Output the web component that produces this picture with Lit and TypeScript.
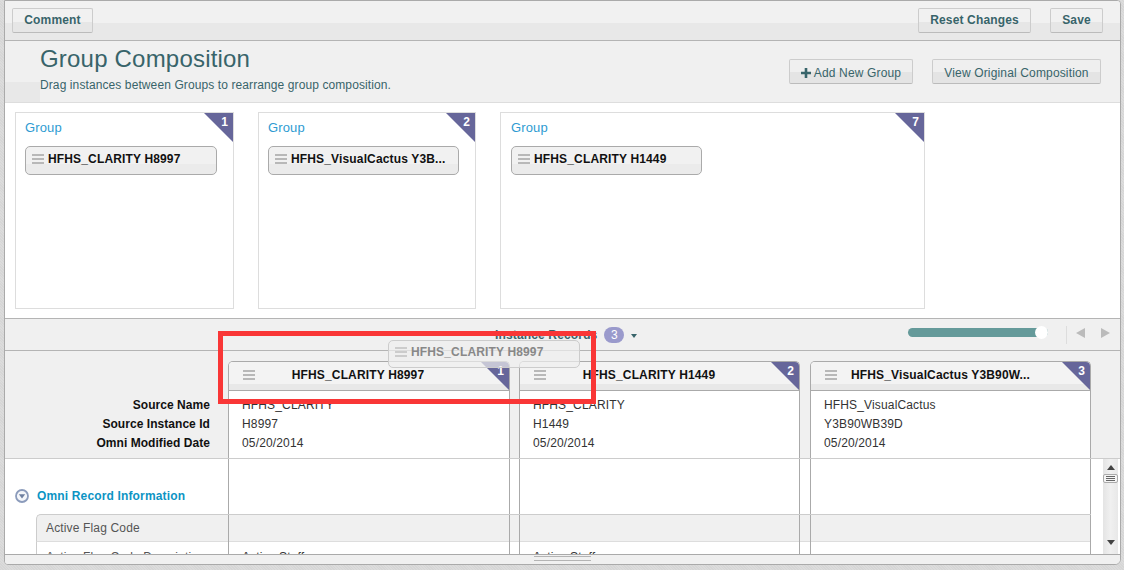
import { LitElement, html, css, svg } from "lit";
import { customElement } from "lit/decorators.js";

const groups = [
  { n: 1, w: 219, name: "HFHS_CLARITY H8997" },
  { n: 2, w: 218, name: "HFHS_VisualCactus Y3B..." },
  { n: 7, w: 425, name: "HFHS_CLARITY H1449" },
];
const cols = [
  { n: 1, title: "HFHS_CLARITY H8997", src: "HFHS_CLARITY", id: "H8997" },
  { n: 2, title: "HFHS_CLARITY H1449", src: "HFHS_CLARITY", id: "H1449" },
  { n: 3, title: "HFHS_VisualCactus Y3B90W...", src: "HFHS_VisualCactus", id: "Y3B90WB39D" },
];

const grip = html`<span class="grip"><i></i><i></i><i></i></span>`;

@customElement("app-root")
export class AppRoot extends LitElement {
  static styles = css`
    :host {
      display: block;
      width: 1124px;
      height: 570px;
      overflow: hidden;
      position: relative;
      font-family: "Liberation Sans", Arial, sans-serif;
      font-size: 12px;
      letter-spacing: 0.15px;
      background: repeating-linear-gradient(45deg, #d6d6d6 0 1px, #dcdcdc 1px 2px);
      box-sizing: border-box;
      padding: 0 3px 5px 4px;
    }
    * { box-sizing: border-box; }
    .panel {
      height: 565px;
      display: flex;
      flex-direction: column;
      border: 1px solid #aaa;
      border-radius: 0 4px 6px 4px;
      background: #fff;
      overflow: hidden;
      position: relative;
    }
    .btn {
      height: 25px;
      border: 1px solid #ccc;
      border-bottom-color: #bbb;
      border-radius: 2px;
      background: linear-gradient(#f1f1f1 0 55%, #e6e6e6 55%);
      color: #38646a;
      font: inherit;
      letter-spacing: inherit;
      font-weight: bold;
      padding: 0;
      display: flex;
      align-items: center;
      justify-content: center;
      flex: none;
    }
    .toolbar {
      flex: none;
      height: 40px;
      display: flex;
      align-items: center;
      padding: 0 17px 1px 7px;
      border-bottom: 1px solid #b4b4b4;
      background: linear-gradient(#f1f1f1 0 57%, #e8e8e8 57%);
    }
    .b-comment { width: 81px; }
    .b-reset { width: 113px; margin-left: auto; }
    .b-save { width: 53px; margin-left: 19px; }
    .header {
      flex: none;
      height: 62px;
      display: flex;
      background: #f0f0f0;
      border-bottom: 1px solid #ddd;
    }
    .hdr-side {
      width: 35px;
      flex: none;
      background: linear-gradient(#f0f0f0 0 68%, #e8e8e8 68%);
    }
    .hdr-text { flex: 1; padding-top: 4px; color: #38646a; }
    .hdr-text h1 {
      margin: 0;
      font-size: 24px;
      line-height: 27px;
      font-weight: normal;
      letter-spacing: 0.2px;
    }
    .hdr-text p { margin: 6px 0 0; line-height: 14px; letter-spacing: 0.1px; }
    .hdr-actions {
      display: flex;
      gap: 19px;
      padding: 18px 19px 0 0;
    }
    .hdr-actions .btn {
      font-weight: normal;
      padding-top: 2px;
      background: linear-gradient(#efefef 0 50%, #e4e4e4 50%);
    }
    .b-add { width: 124px; gap: 3px; }
    .b-view { width: 169px; }
    .groups {
      flex: none;
      height: 216px;
      display: flex;
      gap: 24px;
      padding: 9px 10px;
      border-bottom: 1px solid #b4b4b4;
    }
    .group {
      height: 197px;
      border: 1px solid #ddd;
      position: relative;
      padding: 8px 9px;
    }
    .group h3 {
      margin: 0;
      font-size: 13px;
      line-height: 14px;
      font-weight: normal;
      color: #2e9bd2;
    }
    .group:nth-child(3) { padding-left: 10px; }
    .group:nth-child(n + 2) .chip { width: 191px; }
    .corner {
      position: absolute;
      top: 0;
      right: 0;
      width: 29px;
      height: 29px;
      background: #66669a;
      clip-path: polygon(0 0, 100% 0, 100% 100%);
      color: #fff;
      font-weight: bold;
      text-align: right;
      padding: 2px 5px 0 0;
      line-height: 14px;
    }
    .chip {
      margin-top: 11px;
      width: 192px;
      height: 29px;
      border: 1px solid #aaa;
      border-radius: 5px;
      background: linear-gradient(#f1f1f1 0 62%, #ebebeb 62%);
      display: flex;
      align-items: center;
      padding: 0 6px 4px 6px;
      font-weight: bold;
      color: #111;
      gap: 4px;
    }
    .chip span.txt {
      flex: 1;
      min-width: 0;
      white-space: nowrap;
    }
    .grip {
      flex: none;
      width: 12px;
      display: flex;
      flex-direction: column;
      gap: 2px;
    }
    .grip i { display: block; height: 2px; background: #b8b8b8; }
    .bar {
      flex: none;
      height: 32px;
      display: flex;
      align-items: center;
      background: #f0f0f0;
      border-bottom: 1px solid #b4b4b4;
      padding-left: 490px;
      color: #38646a;
      font-weight: bold;
    }
    .count {
      margin-left: 7px;
      width: 20px;
      height: 16px;
      border-radius: 8px;
      background: #9a9acc;
      color: #fff;
      font-weight: normal;
      text-align: center;
      line-height: 16px;
    }
    .caret {
      margin-left: 7px;
      margin-top: 3px;
      border: 3px solid transparent;
      border-top: 4px solid #38646a;
      border-bottom: 0;
    }
    .slider {
      margin-left: 271px;
      margin-top: -5px;
      width: 140px;
      height: 9px;
      border-radius: 5px;
      background: #659a9a;
      position: relative;
    }
    .knob {
      position: absolute;
      right: 0;
      top: -2px;
      width: 13px;
      height: 13px;
      border-radius: 50%;
      background: #fff;
    }
    .sep {
      margin-left: 18px;
      width: 1px;
      height: 18px;
      background: #ddd;
    }
    .arrow { flex: none; margin-top: -4px; }
    .a-l {
      margin-left: 9px;
      border: 5px solid transparent;
      border-right: 9px solid #bbb;
      border-left: 0;
    }
    .a-r {
      margin-left: 16px;
      border: 5px solid transparent;
      border-left: 9px solid #bbb;
      border-right: 0;
    }
    .grid {
      display: grid;
      grid-template-columns: 214px 282px 282px 281px;
      column-gap: 9px;
    }
    .grid > :nth-child(3) { margin-right: 1px; }
    .head {
      flex: none;
      height: 108px;
      background: #f0f0f0;
      border-bottom: 1px solid #ccc;
      padding-top: 10px;
    }
    .labels {
      padding: 35px 9px 0 0;
      text-align: right;
      font-weight: bold;
      color: #111;
      line-height: 19px;
      letter-spacing: 0.05px;
    }
    .card {
      border: 1px solid #aaa;
      border-bottom: 0;
      border-radius: 5px 5px 0 0;
      background: #fff;
      position: relative;
      overflow: hidden;
    }
    .card-top {
      height: 29px;
      border-bottom: 1px solid #aaa;
      background: linear-gradient(#f3f3f3 0 78%, #e8e8e8 78%);
      display: flex;
      align-items: center;
      padding: 0 0 2px 14px;
    }
    .card-title {
      margin-left: 14px;
      width: 178px;
      text-align: center;
      font-weight: bold;
      color: #111;
      white-space: nowrap;
    }
    .card-body {
      padding: 5px 0 0 13px;
      line-height: 19px;
      color: #333;
    }
    .card .corner { width: 28px; height: 28px; padding-right: 5px; }
    .body {
      flex: 1;
      min-height: 0;
      display: flex;
      overflow: hidden;
    }
    .rows { flex: 1; min-width: 0; }
    .cell { border-left: 1px solid #aaa; border-right: 1px solid #aaa; }
    .sec { height: 55px; }
    .sec-title {
      display: flex;
      align-items: center;
      gap: 8px;
      padding: 19px 0 0 10px;
      font-weight: bold;
      color: #0d94c4;
      height: 55px;
      line-height: 14px;
      white-space: nowrap;
    }
    .row-label { padding-left: 9px; line-height: 27px; color: #555; }
    .row1 {
      height: 28px;
      background: #f0f0f0;
      border-top: 1px solid #ccc;
      border-bottom: 1px solid #ddd;
      margin-left: 31px;
      width: 1055px;
      border-left: 1px solid #ccc;
      border-radius: 5px 0 0 0;
      grid-template-columns: 182px 282px 282px 281px;
    }
    .row2 {
      height: 16px;
      margin-left: 31px;
      width: 1055px;
      border-left: 1px solid #ccc;
      grid-template-columns: 182px 282px 282px 281px;
      line-height: 30px;
      overflow: hidden;
    }
    .row2 .cell { padding-left: 13px; color: #333; }
    .row2 .row-label { line-height: 30px; }
    .scroll {
      flex: none;
      width: 15px;
      margin: 0 2px 0 0;
      background: linear-gradient(90deg, #e4e4e4, #f0f0f0 50%, #e8e8e8);
      display: flex;
      flex-direction: column;
      align-items: center;
      padding-top: 6px;
    }
    .s-up {
      border: 4px solid transparent;
      border-bottom: 5px solid #444;
      border-top: 0;
    }
    .s-thumb {
      width: 15px;
      height: 9px;
      margin-top: 4px;
      border: 1px solid #aaa;
      border-radius: 2px;
      background: #f4f4f4;
      display: flex;
      flex-direction: column;
      align-items: center;
      justify-content: center;
      gap: 1px;
    }
    .s-thumb i { display: block; width: 9px; height: 1px; background: #666; }
    .s-down {
      margin-top: 57px;
      border: 4px solid transparent;
      border-top: 5px solid #444;
      border-bottom: 0;
    }
    .footer {
      flex: none;
      height: 10px;
      border-top: 1px solid #aaa;
      background: #f0f0f0;
      display: flex;
      flex-direction: column;
      align-items: center;
      gap: 3px;
      padding: 1px 0 0 0;
    }
    .footer i { display: block; width: 57px; height: 1px; background: #b4b4b4; }
    .ghost {
      position: absolute;
      left: 388px;
      top: 340px;
      width: 192px;
      height: 28px;
      border: 1px solid #ccc;
      border-radius: 5px;
      background: rgba(238, 238, 238, 0.7);
      display: flex;
      align-items: center;
      gap: 4px;
      padding: 0 6px 5px;
      font-weight: bold;
      color: #888;
    }
    .ghost .grip i { background: #ccc; }
    .mark {
      position: absolute;
      left: 218px;
      top: 331px;
      width: 378px;
      height: 73px;
      border: 5px solid #f93636;
    }
  `;

  render() {
    return html`
      <div class="panel">
        <div class="toolbar">
          <button class="btn b-comment">Comment</button>
          <button class="btn b-reset">Reset Changes</button>
          <button class="btn b-save">Save</button>
        </div>
        <div class="header">
          <div class="hdr-side"></div>
          <div class="hdr-text">
            <h1>Group Composition</h1>
            <p>Drag instances between Groups to rearrange group composition.</p>
          </div>
          <div class="hdr-actions">
            <button class="btn b-add">
              <svg width="10" height="10" viewBox="0 0 10 10">
                ${svg`<path d="M3.7 0h2.6v3.7H10v2.6H6.3V10H3.7V6.3H0V3.7h3.7z" fill="#38646a"></path>`}
              </svg>
              Add New Group
            </button>
            <button class="btn b-view">View Original Composition</button>
          </div>
        </div>
        <div class="groups">
          ${groups.map(
            (g) => html`
              <div class="group" style="width:${g.w}px">
                <div class="corner">${g.n}</div>
                <h3>Group</h3>
                <div class="chip">${grip}<span class="txt">${g.name}</span></div>
              </div>
            `
          )}
        </div>
        <div class="bar">
          <span>Instance Records</span>
          <span class="count">3</span>
          <span class="caret"></span>
          <span class="slider"><span class="knob"></span></span>
          <span class="sep"></span>
          <span class="arrow a-l"></span>
          <span class="arrow a-r"></span>
        </div>
        <div class="head grid">
          <div class="labels">
            <div>Source Name</div>
            <div>Source Instance Id</div>
            <div>Omni Modified Date</div>
          </div>
          ${cols.map(
            (c) => html`
              <div class="card">
                <div class="card-top">
                  ${grip}
                  <div class="card-title">${c.title}</div>
                </div>
                <div class="corner">${c.n}</div>
                <div class="card-body">
                  <div>${c.src}</div>
                  <div>${c.id}</div>
                  <div>05/20/2014</div>
                </div>
              </div>
            `
          )}
        </div>
        <div class="body">
          <div class="rows">
            <div class="grid sec">
              <div class="sec-title">
                <svg width="14" height="14" viewBox="0 0 14 14">
                  ${svg`<circle cx="7" cy="7" r="6" fill="#f4f6fa" stroke="#8b9bbb" stroke-width="1.8"></circle>
                  <path d="M3.8 5.2h6.4L7 9.4z" fill="#6f80a0"></path>`}
                </svg>
                Omni Record Information
              </div>
              <div class="cell"></div>
              <div class="cell"></div>
              <div class="cell"></div>
            </div>
            <div class="grid row1">
              <div class="row-label">Active Flag Code</div>
              <div class="cell"></div>
              <div class="cell"></div>
              <div class="cell"></div>
            </div>
            <div class="grid row2">
              <div class="row-label">Active Flag Code Description</div>
              <div class="cell">Active Staff</div>
              <div class="cell">Active Staff</div>
              <div class="cell"></div>
            </div>
          </div>
          <div class="scroll">
            <span class="s-up"></span>
            <span class="s-thumb"><i></i><i></i><i></i></span>
            <span class="s-down"></span>
          </div>
        </div>
        <div class="footer"><i></i><i></i></div>
      </div>
      <div class="ghost">${grip}<span>HFHS_CLARITY H8997</span></div>
      <div class="mark"></div>
    `;
  }
}
